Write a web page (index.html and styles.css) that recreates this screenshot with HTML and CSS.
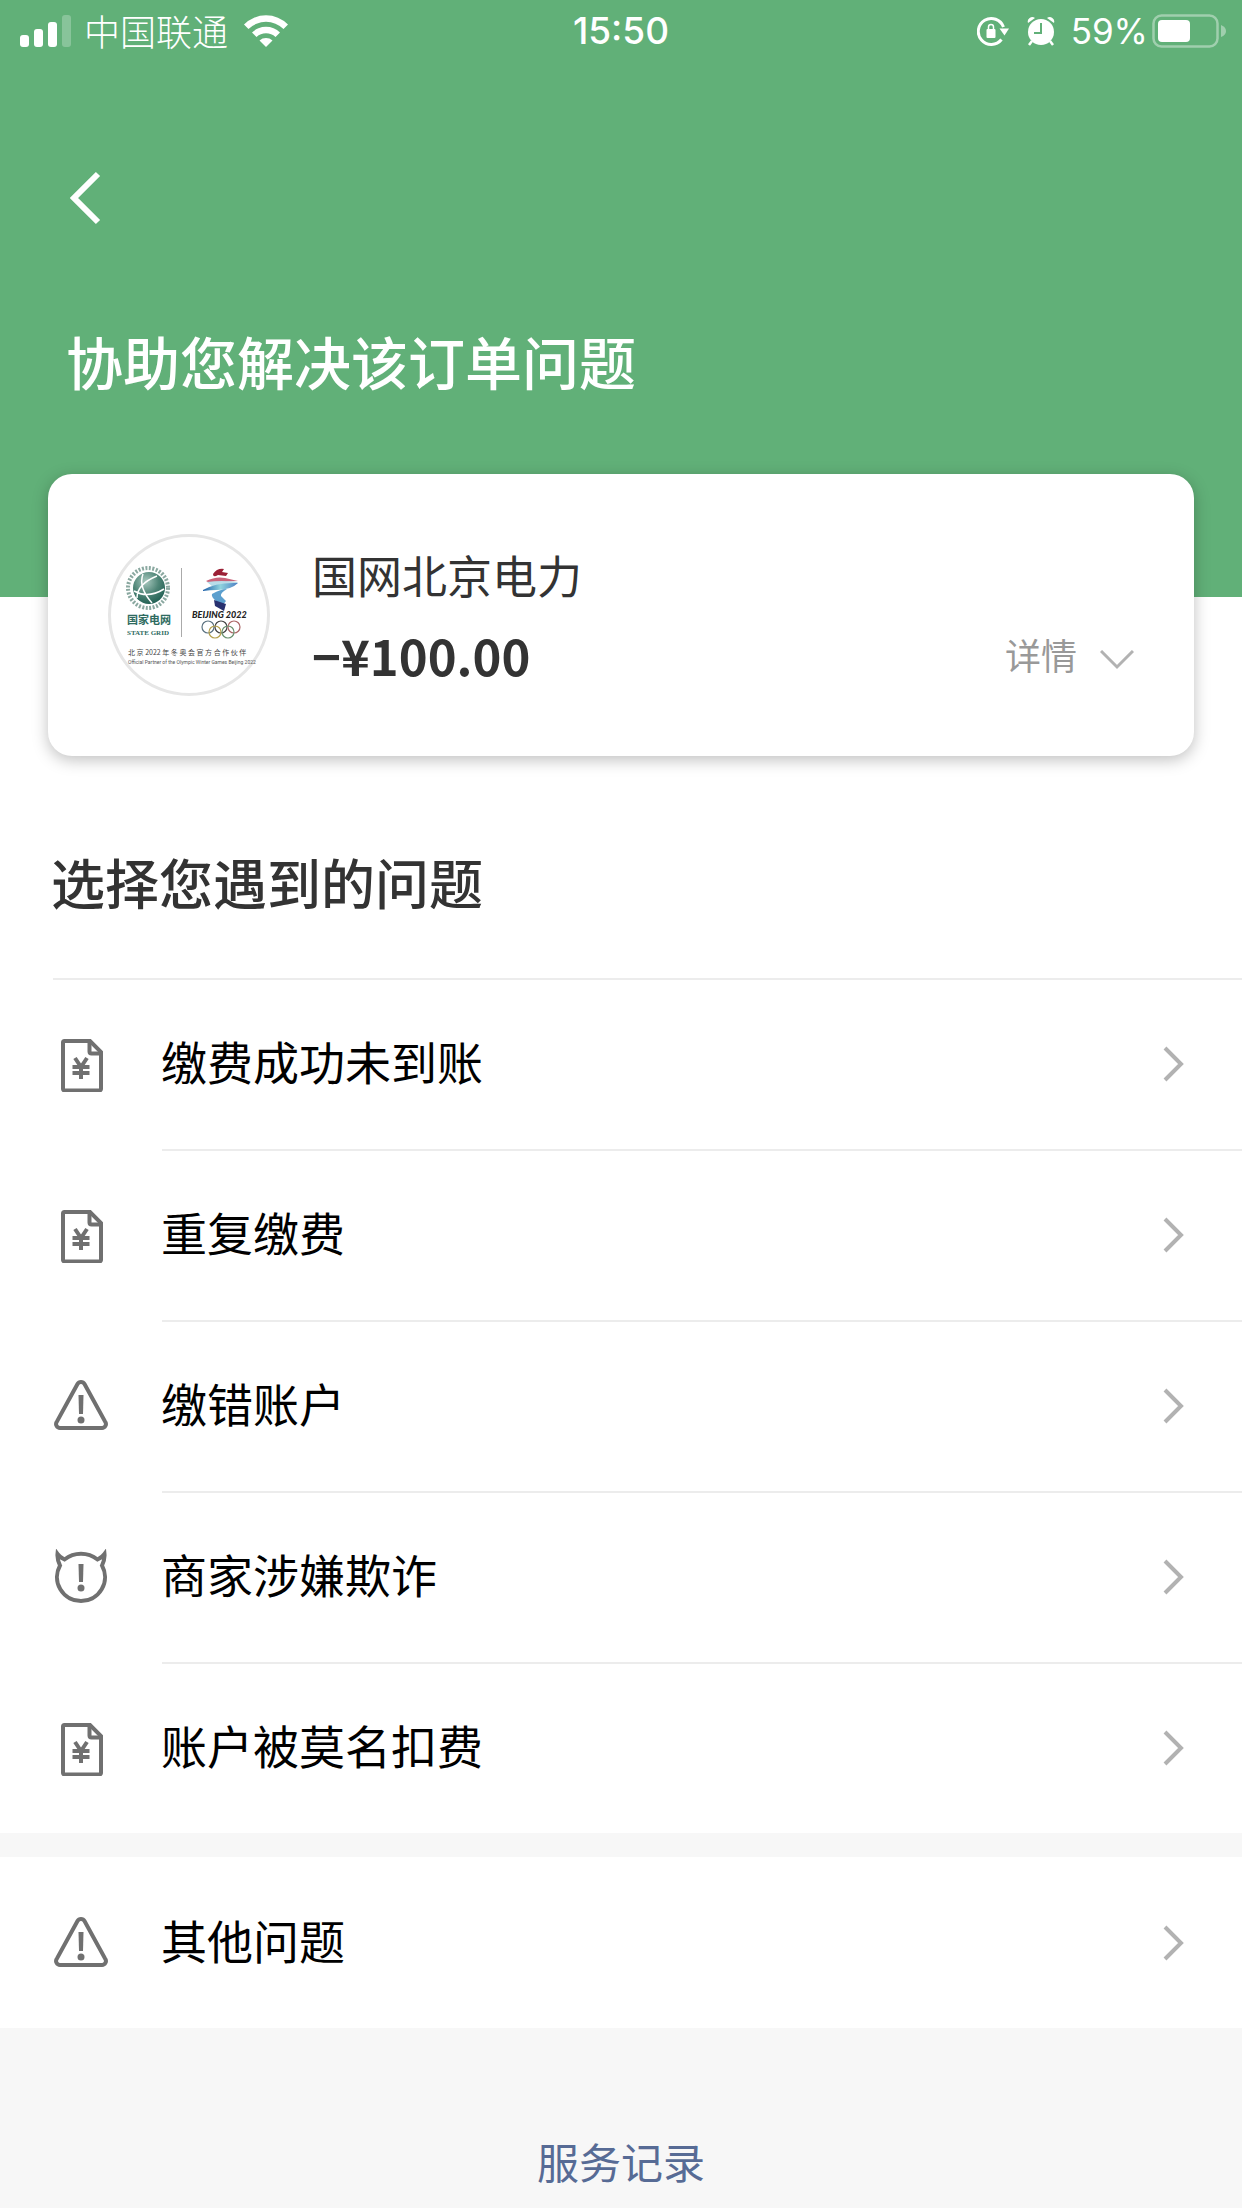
FILE: index.html
```html
<!DOCTYPE html>
<html lang="zh-CN">
<head>
	<meta charset="utf-8">
	<meta name="viewport" content="width=device-width, initial-scale=1">
	<title>订单问题</title>
	<link rel="stylesheet" href="styles.css">
</head>
<body>
	<!-- shared icons -->
	<svg class="sprite" aria-hidden="true">
		<symbol id="bill" viewBox="0 0 56 56">
			<path d="M11.500 5H37l11 11v37a1.500 1.500 0 0 1-1.500 1.500h-35A1.500 1.500 0 0 1 10 53V6.500A1.500 1.500 0 0 1 11.500 5z"/>
			<path d="M36.500 5v10.500a2 2 0 0 0 2 2H48"/>
			<path d="M22 22l6 9 6-9M19.500 31h17M19.500 37h17M28 31v12"/>
		</symbol>
		<symbol id="warn" viewBox="0 0 56 56">
			<path d="M24.500 6a4 4 0 0 1 7 0L52 43.500a4 4 0 0 1-3.500 6.500h-41A4 4 0 0 1 4 43.500z"/>
			<path class="mark" d="M25.500 17h5l-.5 19h-4z"/>
			<circle class="mark" cx="28" cy="42" r="3.500"/>
		</symbol>
		<symbol id="devil" viewBox="0 0 56 56">
			<path d="M11.500 10.500Q7 8.500 4.500 5Q4 10 7 16.500A24 24 0 1 0 49 16.500Q52 10 51.500 5Q49 8.500 44.500 10.500A27 27 0 0 0 11.500 10.500z"/>
			<path class="mark" d="M25.500 15h5l-.5 18h-4z"/>
			<circle class="mark" cx="28" cy="39" r="3.500"/>
		</symbol>
		<symbol id="arrow" viewBox="0 0 22 36">
			<path d="M3 2l16 16L3 34"/>
		</symbol>
	</svg>

	<header class="top">
		<div class="status">
			<div class="status-left">
				<svg class="signal" viewBox="0 0 52 34">
					<rect x="0" y="21" width="9" height="12" rx="3"/>
					<rect x="14" y="15" width="9" height="18" rx="3"/>
					<rect x="28" y="8" width="9" height="25" rx="3"/>
					<rect x="42" y="1" width="9" height="32" rx="3" opacity=".25"/>
				</svg>
				<span class="carrier">中国联通</span>
				<svg class="wifi" viewBox="0 0 46 34">
					<path d="M1 10.500a31 31 0 0 1 44 0l-4.500 4.500a25 25 0 0 0-35 0z"/>
					<path d="M9 18.500a20 20 0 0 1 28 0l-4.500 4.500a14 14 0 0 0-19 0z"/>
					<path d="M16.500 26.500a10 10 0 0 1 13 0L23 33z"/>
				</svg>
			</div>
			<span class="time">15:50</span>
			<div class="status-right">
				<svg class="lock" viewBox="0 0 34 32">
					<path d="M26.500 12A13 13 0 1 0 24.500 24.500" fill="none" stroke="#fff" stroke-width="3"/>
					<path d="M22.500 13.500h9.500l-4.500 7z"/>
					<rect x="9.500" y="14" width="9" height="9" rx="1"/>
					<path d="M11.500 15v-3a2.500 2.500 0 0 1 5 0v3" fill="none" stroke="#fff" stroke-width="1.500"/>
				</svg>
				<svg class="alarm" viewBox="0 0 28 32">
					<circle cx="14" cy="17" r="13"/>
					<path d="M1 8a4.500 4.500 0 0 1 7-5zM27 8a4.500 4.500 0 0 0-7-5z"/>
					<path d="M5 26l-3 4M23 26l3 4" stroke="#fff" stroke-width="2.500"/>
					<path d="M14 8v10H7" fill="none" stroke="#61b078" stroke-width="2"/>
				</svg>
				<span class="percent">59%</span>
				<svg class="battery" viewBox="0 0 74 36">
					<rect x="1.500" y="2.500" width="64" height="31" rx="8" fill="none" stroke="#fff" stroke-width="2.500" opacity=".4"/>
					<rect x="6" y="7" width="32" height="22" rx="4"/>
					<path d="M69 12q5 2 5 6t-5 6z" opacity=".4"/>
				</svg>
			</div>
		</div>
		<button class="back" aria-label="返回">
			<svg viewBox="0 0 32 54"><path d="M28 3L4 27l24 24"/></svg>
		</button>
		<h1>协助您解决该订单问题</h1>
	</header>

	<main>
		<section class="card">
			<svg class="logo" viewBox="0 0 162 162">
				<defs>
					<radialGradient id="globe" cx=".4" cy=".3" r=".8">
						<stop offset="0" stop-color="#a9c9bf"/>
						<stop offset=".5" stop-color="#4f8577"/>
						<stop offset="1" stop-color="#17584b"/>
					</radialGradient>
					<linearGradient id="ribbon">
						<stop offset="0" stop-color="#1d5fa8"/>
						<stop offset=".5" stop-color="#8fd3de"/>
						<stop offset="1" stop-color="#4d7fc4"/>
					</linearGradient>
				</defs>
				<circle cx="81" cy="81" r="79.500" fill="#fff" stroke="#e6e6e6" stroke-width="3"/>
				<circle cx="40" cy="54" r="20" fill="none" stroke="#8aa8a0" stroke-width="4" stroke-dasharray="2 1.500"/>
				<circle cx="41" cy="54" r="16" fill="url(#globe)"/>
				<path d="M26 57q14 8 30-2M35 40q-5 13 9 29M49 42q-20 8-20 22" fill="none" stroke="#fff" stroke-width="1.500"/>
				<text x="19" y="90" class="logo-name">国家电网</text>
				<text x="19" y="101" class="logo-grid">STATE GRID</text>
				<path d="M73.500 34v69" stroke="#aaa"/>
				<path d="M105 40q4-6 11-5l-2 3 6 1-2 3-8-1q-5 3-5-1z" fill="#9b2036"/>
				<path d="M98 47q10-5 19-3l13 3q-12 0-20 3-8 0-12-3z" fill="#c9637a"/>
				<path d="M99 48q14-2 31 0-3 5-16 6l-9-1z" fill="#b8dce8"/>
				<path d="M95 56q13-8 35-7-7 7-21 7-7 0-14 1z" fill="url(#ribbon)"/>
				<path d="M104 60q9-5 15-5-7 4-6 7l5 5-4 5-6-5q-5-4-4-7z" fill="#5b9fce"/>
				<path d="M106 66l12 4-2 7-9-5z" fill="#28316f"/>
				<text x="84" y="84" class="logo-beijing">BEIJING 2022</text>
				<g fill="none" stroke-width="1.200">
					<circle cx="100" cy="93" r="6" stroke="#5b7280"/>
					<circle cx="113" cy="93" r="6" stroke="#444"/>
					<circle cx="126" cy="93" r="6" stroke="#a66"/>
					<circle cx="107" cy="98" r="6" stroke="#b5a04c"/>
					<circle cx="120" cy="98" r="6" stroke="#6a9270"/>
				</g>
				<text x="20" y="121" class="logo-cn">北 京 2022 年 冬 奥 会 官 方 合 作 伙 伴</text>
				<text x="20" y="130" class="logo-en">Official Partner of the Olympic Winter Games Beijing 2022</text>
			</svg>
			<div class="order">
				<div class="merchant">国网北京电力</div>
				<div class="amount">−¥100.00</div>
			</div>
			<button class="detail">详情
				<svg viewBox="0 0 34 20"><path d="M1 1l16 16L33 1"/></svg>
			</button>
		</section>

		<h2>选择您遇到的问题</h2>
		<ul class="list">
			<li><a href="#"><svg class="icon"><use href="#bill"/></svg><span>缴费成功未到账</span><svg class="arrow"><use href="#arrow"/></svg></a></li>
			<li><a href="#"><svg class="icon"><use href="#bill"/></svg><span>重复缴费</span><svg class="arrow"><use href="#arrow"/></svg></a></li>
			<li><a href="#"><svg class="icon"><use href="#warn"/></svg><span>缴错账户</span><svg class="arrow"><use href="#arrow"/></svg></a></li>
			<li><a href="#"><svg class="icon"><use href="#devil"/></svg><span>商家涉嫌欺诈</span><svg class="arrow"><use href="#arrow"/></svg></a></li>
			<li><a href="#"><svg class="icon"><use href="#bill"/></svg><span>账户被莫名扣费</span><svg class="arrow"><use href="#arrow"/></svg></a></li>
		</ul>
		<ul class="list other">
			<li><a href="#"><svg class="icon"><use href="#warn"/></svg><span>其他问题</span><svg class="arrow"><use href="#arrow"/></svg></a></li>
		</ul>
	</main>

	<footer><a href="#">服务记录</a></footer>
</body>
</html>
```

FILE: styles.css
```css
* {
	box-sizing: border-box;
}
body {
	margin: 0;
	background-color: #f7f7f7;
	color: #000;
	font-family: "Noto Sans CJK SC", sans-serif;
}
h1, h2, ul {
	margin: 0;
	padding: 0;
}
a {
	color: inherit;
	text-decoration: none;
}
button {
	padding: 0;
	border: 0;
	background: none;
	font-family: inherit;
}
svg {
	display: block;
	flex: none;
}
.sprite {
	display: none;
}

/* green header */
.top {
	height: 597px;
	background-color: #61b078;
	color: #fff;
}
.status {
	display: grid;
	grid-template-columns: 1fr auto 1fr;
	align-items: center;
	height: 62px;
	padding: 0 16px;
	fill: #fff;
	font-size: 36px;
	line-height: 62px;
}
.status-left, .status-right {
	display: flex;
	align-items: center;
}
.status-right {
	justify-content: flex-end;
}
.signal {
	width: 52px;
	height: 34px;
	margin-left: 4px;
}
.carrier {
	height: 62px;
	margin: 0 15px 0 12px;
	line-height: 60px;
	font-weight: 300;
}
.wifi {
	width: 46px;
	height: 34px;
}
.time, .percent {
	font-family: Inter, sans-serif;
}
.time {
	font-size: 37px;
	font-weight: 500;
}
.lock {
	width: 34px;
	height: 32px;
	margin-right: 16px;
}
.alarm {
	width: 28px;
	height: 32px;
	margin-right: 16px;
}
.percent {
	margin-right: 4px;
	font-size: 35px;
}
.battery {
	width: 74px;
	height: 36px;
}
.back {
	display: block;
	margin: 109px 0 0 70px;
}
.back svg {
	width: 32px;
	height: 54px;
	fill: none;
	stroke: #fff;
	stroke-width: 6px;
}
h1 {
	padding: 95px 66px 0;
	font-size: 57px;
	line-height: 80px;
	font-weight: 500;
}

/* order card */
main {
	background-color: #fff;
}
.card {
	display: flex;
	position: relative;
	top: -123px;
	align-items: center;
	height: 282px;
	margin: 0 48px -123px;
	padding: 0 60px;
	border-radius: 24px;
	background-color: #fff;
	box-shadow: 0 4px 16px rgba(0, 0, 0, 0.25);
}
.logo {
	width: 162px;
	height: 162px;
}
.logo-name {
	font-size: 11px;
	font-weight: 700;
	fill: #2e6b5f;
}
.logo-grid {
	font: bold 7px "Liberation Serif", serif;
	fill: #2e6b5f;
}
.logo-beijing {
	font: italic 900 9px Lato, sans-serif;
	fill: #222;
}
.logo-cn {
	font-size: 7px;
	fill: #444;
}
.logo-en {
	font: 5px Roboto, sans-serif;
	fill: #555;
}
.order {
	flex: 1;
	margin-left: 42px;
	color: #333;
}
.merchant {
	padding-top: 10px;
	font-size: 45px;
	line-height: 70px;
}
.amount {
	font-size: 49px;
	line-height: 90px;
	font-weight: 700;
}
.detail {
	display: flex;
	align-items: center;
	gap: 23px;
	margin-top: 78px;
	color: #999;
	font-size: 36px;
}
.detail svg {
	width: 34px;
	height: 20px;
	margin-top: 12px;
	fill: none;
	stroke: #b2b2b2;
	stroke-width: 3px;
}

/* problem list */
h2 {
	padding: 86px 51px 56px;
	color: #333;
	font-size: 54px;
	line-height: 80px;
	font-weight: 500;
}
.list {
	border-bottom: 24px solid #f7f7f7;
	list-style: none;
}
.list a {
	display: flex;
	align-items: center;
	height: 171px;
	padding-left: 53px;
	font-size: 46px;
}
.list span {
	flex: 1;
	margin-left: 52px;
	padding-bottom: 8px;
}
.list li {
	background: linear-gradient(#ececec, #ececec) 162px 0 / 100% 2px no-repeat;
}
.list li:first-child {
	background-position: 53px 0;
}
.other li:first-child {
	background: none;
}
.other {
	border: 0;
}
.icon {
	width: 56px;
	height: 56px;
	fill: none;
	stroke: #707070;
	stroke-width: 4px;
}
.mark {
	fill: #707070;
	stroke: none;
}
.arrow {
	width: 22px;
	height: 36px;
	margin-right: 58px;
	fill: none;
	stroke: #b2b2b2;
	stroke-width: 4px;
}

footer {
	padding: 103px 0 17px;
	color: #576b95;
	font-size: 42px;
	line-height: 60px;
	text-align: center;
}
```
